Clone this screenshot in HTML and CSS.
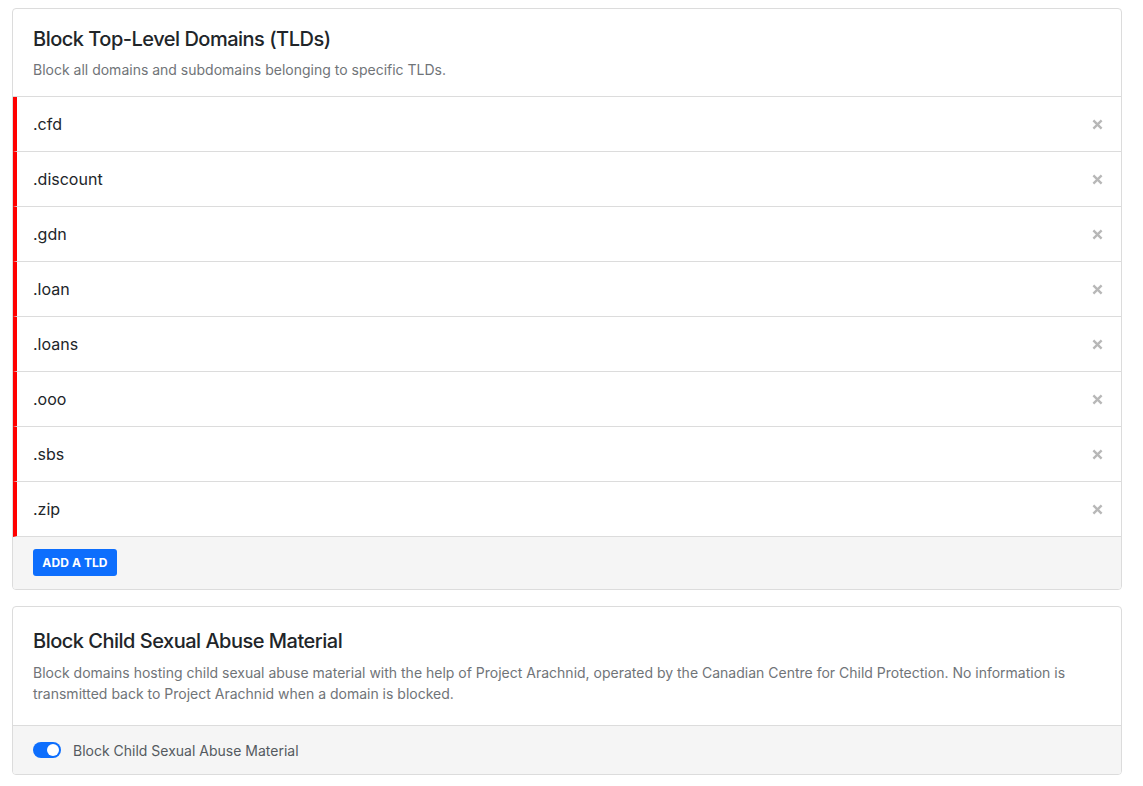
FILE: index.html
```html
<!DOCTYPE html>
<html lang="en">
<head>
<meta charset="utf-8">
<title>Blocking settings</title>
<link rel="stylesheet" href="styles.css">
</head>
<body>
<main class="page">
  <section class="card">
    <header class="card-header card-header--tld">
      <h2 class="card-title">Block Top-Level Domains (TLDs)</h2>
      <p class="card-desc">Block all domains and subdomains belonging to specific TLDs.</p>
    </header>
    <ul class="tld-list">
      <li class="tld-row"><span class="tld-name">.cfd</span><button class="remove" aria-label="Remove"><svg viewBox="0 0 12 12"><path d="M1.5 1.5 L10.5 10.5 M10.5 1.5 L1.5 10.5"/></svg></button></li>
      <li class="tld-row"><span class="tld-name">.discount</span><button class="remove" aria-label="Remove"><svg viewBox="0 0 12 12"><path d="M1.5 1.5 L10.5 10.5 M10.5 1.5 L1.5 10.5"/></svg></button></li>
      <li class="tld-row"><span class="tld-name">.gdn</span><button class="remove" aria-label="Remove"><svg viewBox="0 0 12 12"><path d="M1.5 1.5 L10.5 10.5 M10.5 1.5 L1.5 10.5"/></svg></button></li>
      <li class="tld-row"><span class="tld-name">.loan</span><button class="remove" aria-label="Remove"><svg viewBox="0 0 12 12"><path d="M1.5 1.5 L10.5 10.5 M10.5 1.5 L1.5 10.5"/></svg></button></li>
      <li class="tld-row"><span class="tld-name">.loans</span><button class="remove" aria-label="Remove"><svg viewBox="0 0 12 12"><path d="M1.5 1.5 L10.5 10.5 M10.5 1.5 L1.5 10.5"/></svg></button></li>
      <li class="tld-row"><span class="tld-name">.ooo</span><button class="remove" aria-label="Remove"><svg viewBox="0 0 12 12"><path d="M1.5 1.5 L10.5 10.5 M10.5 1.5 L1.5 10.5"/></svg></button></li>
      <li class="tld-row"><span class="tld-name">.sbs</span><button class="remove" aria-label="Remove"><svg viewBox="0 0 12 12"><path d="M1.5 1.5 L10.5 10.5 M10.5 1.5 L1.5 10.5"/></svg></button></li>
      <li class="tld-row"><span class="tld-name">.zip</span><button class="remove" aria-label="Remove"><svg viewBox="0 0 12 12"><path d="M1.5 1.5 L10.5 10.5 M10.5 1.5 L1.5 10.5"/></svg></button></li>
    </ul>
    <footer class="card-footer card-footer--tld">
      <button class="btn-primary">ADD A TLD</button>
    </footer>
  </section>

  <section class="card">
    <header class="card-header card-header--csam">
      <h2 class="card-title">Block Child Sexual Abuse Material</h2>
      <p class="card-desc">Block domains hosting child sexual abuse material with the help of Project Arachnid, operated by the Canadian Centre for Child Protection. No information is transmitted back to Project Arachnid when a domain is blocked.</p>
    </header>
    <footer class="card-footer card-footer--csam">
      <label class="switch-row">
        <span class="switch"><span class="knob"></span></span>
        <span class="switch-label">Block Child Sexual Abuse Material</span>
      </label>
    </footer>
  </section>
</main>
</body>
</html>
```
FILE: styles.css
```css
* { box-sizing: border-box; }

html, body {
  margin: 0;
  padding: 0;
  background: #ffffff;
}

body {
  font-family: Inter, "Noto Sans", "Liberation Sans", sans-serif;
  color: #212529;
}

.page {
  display: flex;
  flex-direction: column;
  gap: 16px;
  padding: 8px 21px 0 12px;
}

.card {
  border: 1px solid #dcdcdc;
  border-radius: 4px;
  background: #fff;
  overflow: hidden;
}

.card-header {
  border-bottom: 1px solid #dcdcdc;
  padding: 18px 20px 16px;
}

.card-header--csam {
  padding: 22px 20px 21px;
}

.card-title {
  margin: 0;
  font-size: 20px;
  font-weight: 500;
  line-height: 24px;
  color: #212529;
  letter-spacing: -0.5px;
}

.card-desc {
  margin: 8px 0 0;
  font-size: 14px;
  line-height: 21px;
  color: #707478;
}

.card-header--csam .card-desc {
  margin-top: 9px;
}

.tld-list {
  list-style: none;
  margin: 0;
  padding: 0;
}

.tld-row {
  display: flex;
  align-items: center;
  justify-content: space-between;
  height: 55px;
  padding: 0 18px 0 16px;
  border-left: 4px solid #ff0000;
  border-bottom: 1px solid #dcdcdc;
}

.tld-name {
  font-size: 16px;
  color: #212529;
  font-weight: 400;
}

.remove {
  border: 0;
  background: none;
  padding: 0;
  width: 11px;
  height: 11px;
  display: flex;
  cursor: pointer;
}

.remove svg {
  width: 11px;
  height: 11px;
  stroke: #b8b8b8;
  stroke-width: 2.6;
  stroke-linecap: butt;
  fill: none;
}

.card-footer {
  background: #f5f5f5;
  padding: 12px 20px;
}

.card-footer--tld {
  height: 52px;
}

.card-footer--csam {
  height: 48px;
  display: flex;
  align-items: center;
}

.btn-primary {
  font-family: inherit;
  background: #0d6efd;
  color: #fff;
  border: 0;
  border-radius: 3px;
  height: 27px;
  width: 84px;
  padding: 0;
  font-size: 12px;
  font-weight: 700;
  letter-spacing: 0.1px;
}

.switch-row {
  display: flex;
  align-items: center;
  gap: 12px;
}

.switch {
  width: 28px;
  height: 16px;
  border-radius: 8px;
  background: #0d6efd;
  display: flex;
  align-items: center;
  justify-content: flex-end;
  padding: 0 2px;
}

.knob {
  width: 12px;
  height: 12px;
  border-radius: 50%;
  background: #fff;
}

.switch-label {
  font-size: 14px;
  color: #545a60;
}
```
